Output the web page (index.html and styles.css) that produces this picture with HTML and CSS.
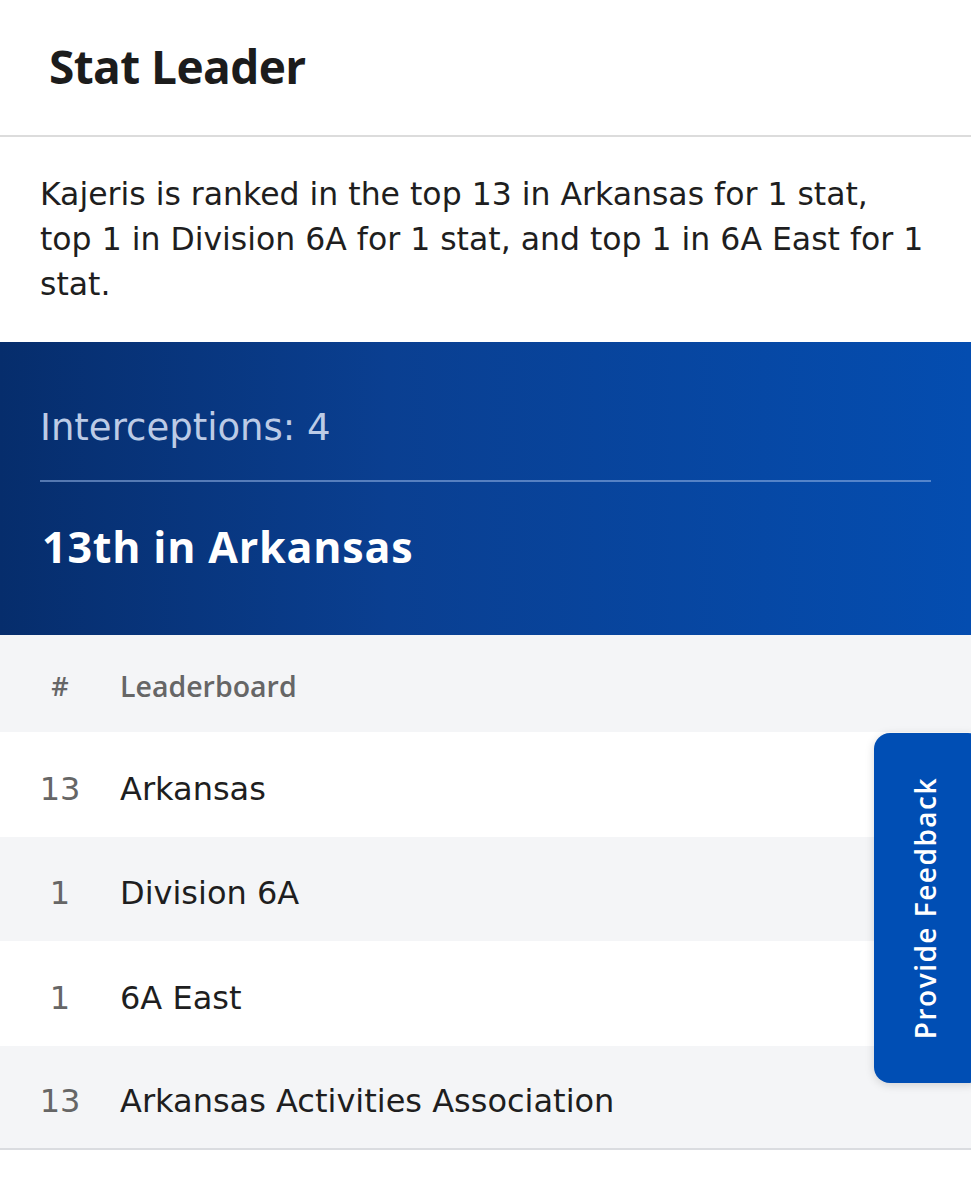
FILE: index.html
```html
<!DOCTYPE html>
<html>
<head>
<meta charset="utf-8">
<link rel="stylesheet" href="styles.css">
</head>
<body>
<div class="card">
  <header class="card-head">
    <h1 class="title">Stat Leader</h1>
  </header>
  <p class="summary">Kajeris is ranked in the top 13 in Arkansas for 1 stat, top 1 in Division 6A for 1 stat, and top 1 in 6A East for 1 stat.</p>
  <section class="hero">
    <div class="stat">Interceptions: 4</div>
    <div class="rank">13th in Arkansas</div>
  </section>
  <div class="table">
    <div class="row head"><span class="num">#</span><span class="name">Leaderboard</span></div>
    <div class="row"><span class="num">13</span><span class="name">Arkansas</span></div>
    <div class="row alt"><span class="num">1</span><span class="name">Division 6A</span></div>
    <div class="row"><span class="num">1</span><span class="name">6A East</span></div>
    <div class="row alt last"><span class="num">13</span><span class="name">Arkansas Activities Association</span></div>
  </div>
</div>
<button class="feedback"><span>Provide Feedback</span></button>
</body>
</html>
```
FILE: styles.css
```css
* { box-sizing: border-box; }
html, body { margin: 0; padding: 0; background: #fff; }
body { font-family: "DejaVu Sans", "Noto Sans", sans-serif; color: #1d1d1f; width: 971px; height: 1200px; overflow: hidden; position: relative; }
.card-head { height: 137px; border-bottom: 2px solid #dcdcdc; display: flex; align-items: center; padding-left: 49px; }
.title { margin: 0; font-family: "Open Sans", sans-serif; font-size: 46px; font-weight: 700; letter-spacing: -0.6px; color: #1c1c1c; padding-bottom: 4px; }
.summary { margin: 0; padding: 35px 44px 40px 40px; font-size: 31.5px; line-height: 45px; color: #1e1e20; height: 205px; }
.hero { height: 293px; background: linear-gradient(90deg, #062d6c 0%, #0a3f91 40%, #044db0 100%); padding: 0 40px; display: flex; flex-direction: column; }
.stat { height: 140px; border-bottom: 2px solid rgba(150,180,230,0.55); display: flex; align-items: center; padding-top: 33px; font-size: 37px; color: #bccbe6; }
.rank { font-family: "Open Sans", sans-serif; font-size: 43px; font-weight: 700; letter-spacing: 0.8px; color: #fff; padding-top: 35px; padding-left: 2px; }
.row { height: 104.5px; display: flex; align-items: center; font-size: 32px; background: #fff; padding-top: 9px; }
.row.alt, .row.head { background: #f4f5f7; }
.row.head { height: 97px; padding-top: 4px; color: #666; }
.row.head .num { font-family: "Open Sans", sans-serif; font-size: 27px; font-weight: 600; }
.row.head .name { font-family: "Open Sans", sans-serif; font-size: 28.5px; font-weight: 600; color: #666; }
.row.last { border-bottom: 2px solid #dadce0; }
.num { width: 120px; text-align: center; color: #666; }
.row .name { color: #1e1e20; }
.feedback { position: absolute; left: 874px; top: 733px; width: 110px; height: 350px; border: none; border-radius: 16px; background: #004eb4; color: #fff; box-shadow: 0 2px 10px rgba(0,0,0,0.15); padding: 0; display: flex; align-items: center; justify-content: flex-start; }
.feedback span { display: block; writing-mode: vertical-rl; transform: rotate(180deg); font-family: "Open Sans", sans-serif; font-size: 28px; font-weight: 600; letter-spacing: 1.5px; white-space: nowrap; margin-left: 32px; }
```
